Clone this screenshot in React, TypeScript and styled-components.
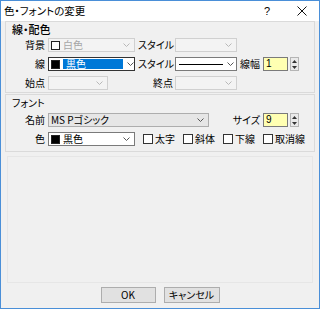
import React from 'react';
import styled, { createGlobalStyle } from 'styled-components';

const Global = createGlobalStyle`
  html, body { margin: 0; padding: 0; background: #ffffff; }
  body { font-family: "Noto Sans CJK JP", "Noto Sans", sans-serif; }
`;

const Window = styled.div`
  width: 320px;
  height: 309px;
  box-sizing: border-box;
  border: 1px solid #4a8fd8;
  background: #f0f0f0;
  display: flex;
  flex-direction: column;
  font-family: "Noto Sans CJK JP", "Noto Sans", sans-serif;
  font-feature-settings: "palt";
  font-size: 10px;
  line-height: 14px;
  color: #000;
`;

const TitleBar = styled.div`
  height: 20px;
  flex: none;
  background: #ffffff;
  display: flex;
  align-items: center;
  padding-left: 3px;
`;

const Title = styled.div`
  flex: 1;
  font-size: 10.5px;
`;

const TitleButton = styled.div<{ $w: number }>`
  width: ${(p) => p.$w}px;
  height: 20px;
  display: flex;
  align-items: center;
  justify-content: center;
  font-family: "Liberation Sans", sans-serif;
  font-size: 11px;
`;

const Body = styled.div`
  flex: 1;
  display: flex;
  flex-direction: column;
  padding: 0 4px 4px 4px;
`;

const Group = styled.div<{ $top: number; $pb: number }>`
  margin-top: ${(p) => p.$top}px;
  border: 1px solid #dadada;
  padding: 1px 0 ${(p) => p.$pb}px 0;
  display: flex;
  flex-direction: column;
`;

const GroupHeader = styled.div<{ $size: number; $mb: number; $bold?: boolean }>`
  height: 13px;
  line-height: 13px;
  padding-left: 6px;
  font-size: ${(p) => p.$size}px;
  font-weight: ${(p) => (p.$bold ? 500 : 400)};
  margin-bottom: ${(p) => p.$mb}px;
`;

const Rows = styled.div`
  display: flex;
  flex-direction: column;
  gap: 5px;
`;

const Row = styled.div`
  display: flex;
  align-items: center;
  height: 14px;
`;

const Label = styled.div<{ $w: number; $pr?: number }>`
  width: ${(p) => p.$w}px;
  flex: none;
  box-sizing: border-box;
  padding-right: ${(p) => p.$pr ?? 3}px;
  text-align: right;
  white-space: nowrap;
`;

type ComboKind = 'disabled' | 'focus' | 'list' | 'white';

const Combo = styled.div<{ $w: number; $kind: ComboKind }>`
  width: ${(p) => p.$w}px;
  height: 14px;
  flex: none;
  box-sizing: border-box;
  display: flex;
  align-items: center;
  padding: 0 0 0 2px;
  border: 1px solid
    ${(p) =>
      p.$kind === 'disabled' ? '#d0d0d0' : p.$kind === 'list' ? '#adadad' : p.$kind === 'focus' ? '#333' : '#7a7a7a'};
  background: ${(p) => (p.$kind === 'disabled' ? '#f3f3f3' : p.$kind === 'list' ? '#e6e6e6' : '#ffffff')};
  color: ${(p) => (p.$kind === 'disabled' ? '#a6a6a6' : '#000')};
`;

const ComboBody = styled.div`
  flex: 1;
  height: 12px;
  line-height: 12px;
  display: flex;
  align-items: center;
  white-space: nowrap;
`;

const Swatch = styled.div<{ $c: string }>`
  width: 9px;
  height: 9px;
  box-sizing: border-box;
  flex: none;
  border: 1px solid #222;
  background: ${(p) => p.$c};
  margin-right: 3px;
`;

const Highlight = styled.div<{ $w: number }>`
  width: ${(p) => p.$w}px;
  height: 10px;
  background: #0078d7;
  color: #fff;
  line-height: 10px;
  padding-left: 3px;
  box-sizing: border-box;
`;

const StyleLine = styled.div`
  width: 44px;
  height: 1px;
  background: #000;
  margin-left: 1px;
`;

const ChevronBox = styled.div`
  width: 15px;
  flex: none;
  display: flex;
  align-items: center;
  justify-content: center;
`;

const NumInput = styled.div`
  width: 25px;
  height: 14px;
  box-sizing: border-box;
  border: 1px solid #7a7a7a;
  background: #ffffb2;
  padding-left: 2px;
  line-height: 12px;
  font-family: "Liberation Sans", sans-serif;
  font-size: 10px;
`;

const Spinner = styled.div`
  width: 9px;
  height: 14px;
  margin-left: 2px;
  box-sizing: border-box;
  border: 1px solid #b5b5b5;
  background: #eaeaea;
  display: flex;
  flex-direction: column;
  align-items: center;
  justify-content: space-around;
`;

const CheckGroup = styled.div`
  display: flex;
  align-items: center;
  margin-left: 8px;
  gap: 5px;
`;

const Check = styled.label`
  display: flex;
  align-items: center;
  gap: 2px;
  width: 35px;
  white-space: nowrap;
`;

const Box = styled.span`
  width: 10px;
  height: 10px;
  box-sizing: border-box;
  border: 1px solid #333;
  background: #fff;
  flex: none;
`;

const Panel = styled.div`
  margin: 4px 2px 0 2px;
  height: 127px;
  box-sizing: border-box;
  border: 1px solid #e6e6e6;
`;

const Buttons = styled.div`
  margin-top: 4px;
  display: flex;
  justify-content: center;
  gap: 8px;
`;

const Button = styled.button<{ $w: number }>`
  width: ${(p) => p.$w}px;
  height: 16px;
  padding: 0;
  box-sizing: border-box;
  border: 1px solid #adadad;
  background: #e1e1e1;
  font-family: "Noto Sans CJK JP", sans-serif;
  font-feature-settings: "palt";
  font-size: 10px;
  line-height: 14px;
  color: #000;
`;

const Chevron = ({ c }: { c: string }) => (
  <svg width="7" height="4" viewBox="0 0 7 4">
    <polyline points="0.5,0.5 3.5,3.5 6.5,0.5" fill="none" stroke={c} strokeWidth="1" />
  </svg>
);

const Arrow = ({ up }: { up?: boolean }) => (
  <svg width="5" height="3" viewBox="0 0 5 3">
    <polygon points={up ? '0,3 5,3 2.5,0' : '0,0 5,0 2.5,3'} fill="#333" />
  </svg>
);

const Drop = ({ w, kind, children }: { w: number; kind: ComboKind; children?: React.ReactNode }) => (
  <Combo $w={w} $kind={kind}>
    <ComboBody>{children}</ComboBody>
    <ChevronBox>
      <Chevron c={kind === 'disabled' ? '#b8b8b8' : '#555'} />
    </ChevronBox>
  </Combo>
);

const Spin = () => (
  <Spinner>
    <Arrow up />
    <Arrow />
  </Spinner>
);

export default function App() {
  return (
    <>
      <Global />
      <Window>
        <TitleBar>
          <Title>色・フォントの変更</Title>
          <TitleButton $w={36}>?</TitleButton>
          <TitleButton $w={34}>
            <svg width="10" height="10" viewBox="0 0 10 10">
              <path d="M0.5 0.5 L9.5 9.5 M9.5 0.5 L0.5 9.5" stroke="#111" strokeWidth="1" />
            </svg>
          </TitleButton>
        </TitleBar>
        <Body>
          <Group $top={0} $pb={2}>
            <GroupHeader $size={11} $mb={2} $bold>線・配色</GroupHeader>
            <Rows>
              <Row>
                <Label $w={42}>背景</Label>
                <Drop w={87} kind="disabled">
                  <Swatch $c="#fff" />
                  白色
                </Drop>
                <Label $w={40} $pr={1}>スタイル</Label>
                <Drop w={62} kind="disabled" />
              </Row>
              <Row>
                <Label $w={42}>線</Label>
                <Drop w={87} kind="focus">
                  <Swatch $c="#000" />
                  <Highlight $w={60}>黒色</Highlight>
                </Drop>
                <Label $w={40} $pr={1}>スタイル</Label>
                <Drop w={62} kind="white">
                  <StyleLine />
                </Drop>
                <Label $w={26}>線幅</Label>
                <NumInput>1</NumInput>
                <Spin />
              </Row>
              <Row>
                <Label $w={42}>始点</Label>
                <Drop w={60} kind="disabled" />
                <Label $w={67} $pr={2}>終点</Label>
                <Drop w={62} kind="disabled" />
              </Row>
            </Rows>
          </Group>
          <Group $top={1} $pb={5}>
            <GroupHeader $size={10} $mb={4}>フォント</GroupHeader>
            <Rows>
              <Row>
                <Label $w={42}>名前</Label>
                <Drop w={161} kind="list">MS Pゴシック</Drop>
                <Label $w={54}>サイズ</Label>
                <NumInput>9</NumInput>
                <Spin />
              </Row>
              <Row>
                <Label $w={42}>色</Label>
                <Drop w={87} kind="white">
                  <Swatch $c="#000" />
                  黒色
                </Drop>
                <CheckGroup>
                  <Check><Box />太字</Check>
                  <Check><Box />斜体</Check>
                  <Check><Box />下線</Check>
                  <Check><Box />取消線</Check>
                </CheckGroup>
              </Row>
            </Rows>
          </Group>
          <Panel />
          <Buttons>
            <Button $w={55}>OK</Button>
            <Button $w={56}>キャンセル</Button>
          </Buttons>
        </Body>
      </Window>
    </>
  );
}
